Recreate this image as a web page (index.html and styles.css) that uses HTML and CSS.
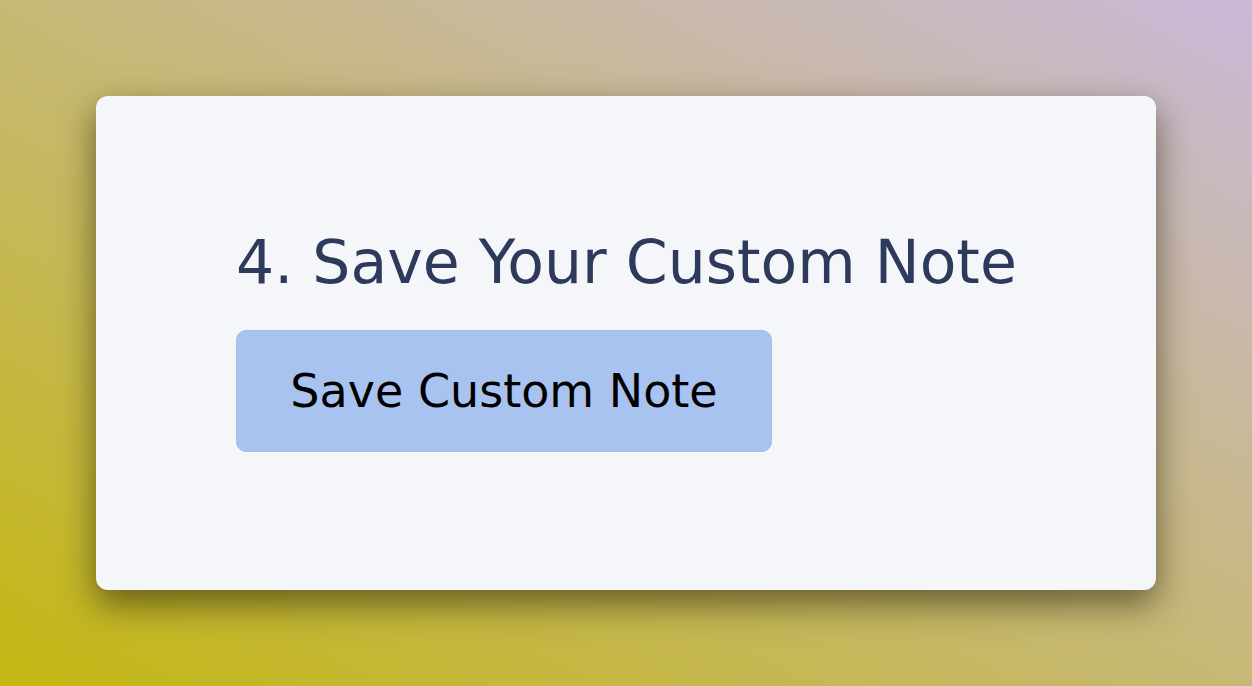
FILE: index.html
```html
<!DOCTYPE html>
<html>
<head>
  <title>Save Custom Note</title>
  <link rel="stylesheet" href="styles.css">
</head>
<body>
<div class="card">
  <h2 class="step-title">4. Save Your Custom Note</h2>
  <button class="save-btn">Save Custom Note</button>
</div>
</body>
</html>
```
FILE: styles.css
```css
html, body {
  height: 100%;
}
body {
  margin: 0;
  font-family: "DejaVu Sans", Verdana, sans-serif;
  background: linear-gradient(to top right, #c3b712, #cab9da);
  display: flex;
  justify-content: center;
  align-items: center;
}
.card {
  width: 1060px;
  height: 494px;
  box-sizing: border-box;
  padding: 130px 100px 130px 140px;
  background: #f4f6fa;
  border-radius: 12px;
  box-shadow: 0 14px 34px rgba(40, 35, 10, 0.6);
}
.step-title {
  margin: 0 0 32px 0;
  font-size: 60px;
  font-weight: normal;
  color: #2e3a5c;
  line-height: 1.2;
  white-space: nowrap;
}
.save-btn {
  width: 536px;
  height: 122px;
  font-family: inherit;
  font-size: 46px;
  color: #000;
  background: #a9c3f0;
  border: 1px solid #a3bdea;
  border-radius: 10px;
}
```
